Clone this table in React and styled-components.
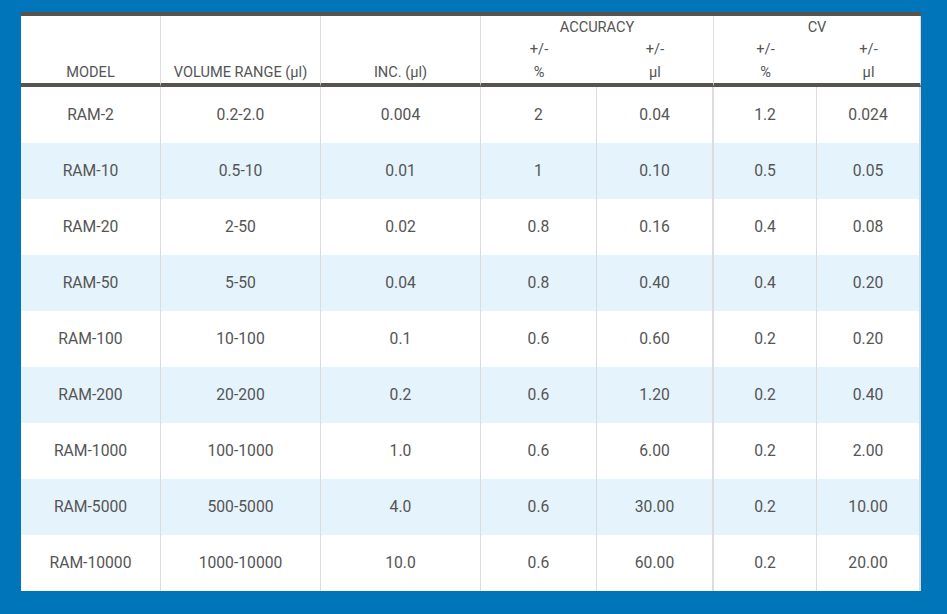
import React from "react";
import styled, { createGlobalStyle } from "styled-components";

const Global = createGlobalStyle`
  html, body { margin: 0; padding: 0; }
  body {
    background: #0075ba;
    font-family: Roboto, "Liberation Sans", Arial, sans-serif;
  }
`;

const Page = styled.div`
  width: 947px;
  height: 614px;
  padding: 12px 0 0 21px;
  box-sizing: border-box;
`;

const Table = styled.table`
  width: 900px;
  table-layout: fixed;
  border-collapse: separate;
  border-spacing: 0;
  background: #fff;
  border-top: 4px solid #57544e;
  color: #555;
`;

const HeadRow = styled.tr`
  height: ${(p) => p.$h}px;
`;

const Th = styled.th`
  font-weight: 400;
  font-size: 14.6px;
  line-height: 22px;
  padding: 0;
  text-align: center;
  vertical-align: ${(p) => (p.$bottom ? "bottom" : "middle")};
  border-right: ${(p) => (p.$line ? "1px solid #dcdcdc" : "none")};
  border-bottom: ${(p) => (p.$base ? "4px solid #57544e" : "none")};
  box-sizing: border-box;
`;

const Row = styled.tr`
  height: 56px;
  background: ${(p) => (p.$alt ? "#e5f3fc" : "#fff")};
`;

const Td = styled.td`
  font-size: 15.7px;
  line-height: 20px;
  padding: 0 0 1px;
  text-align: center;
  vertical-align: middle;
  border-right: ${(p) => p.$w}px solid #dcdcdc;
`;

const cols = [140, 160, 160, 116, 117, 103, 104];
const borders = [1, 1, 1, 1, 2, 1, 2];

const rows = [
  ["RAM-2", "0.2-2.0", "0.004", "2", "0.04", "1.2", "0.024"],
  ["RAM-10", "0.5-10", "0.01", "1", "0.10", "0.5", "0.05"],
  ["RAM-20", "2-50", "0.02", "0.8", "0.16", "0.4", "0.08"],
  ["RAM-50", "5-50", "0.04", "0.8", "0.40", "0.4", "0.20"],
  ["RAM-100", "10-100", "0.1", "0.6", "0.60", "0.2", "0.20"],
  ["RAM-200", "20-200", "0.2", "0.6", "1.20", "0.2", "0.40"],
  ["RAM-1000", "100-1000", "1.0", "0.6", "6.00", "0.2", "2.00"],
  ["RAM-5000", "500-5000", "4.0", "0.6", "30.00", "0.2", "10.00"],
  ["RAM-10000", "1000-10000", "10.0", "0.6", "60.00", "0.2", "20.00"],
];

export default function App() {
  return (
    <>
      <Global />
      <Page>
        <Table>
          <colgroup>
            {cols.map((w, i) => (
              <col key={i} style={{ width: w }} />
            ))}
          </colgroup>
          <thead>
            <HeadRow $h={22}>
              <Th rowSpan={3} $bottom $line $base>MODEL</Th>
              <Th rowSpan={3} $bottom $line $base>VOLUME RANGE (µl)</Th>
              <Th rowSpan={3} $bottom $line $base>INC. (µl)</Th>
              <Th colSpan={2} $line>ACCURACY</Th>
              <Th colSpan={2} $line>CV</Th>
            </HeadRow>
            <HeadRow $h={22}>
              <Th>+/-</Th>
              <Th $line>+/-</Th>
              <Th>+/-</Th>
              <Th $line>+/-</Th>
            </HeadRow>
            <HeadRow $h={27}>
              <Th $base>%</Th>
              <Th $base $line>µl</Th>
              <Th $base>%</Th>
              <Th $base $line>µl</Th>
            </HeadRow>
          </thead>
          <tbody>
            {rows.map((r, i) => (
              <Row key={i} $alt={i % 2 === 1}>
                {r.map((c, j) => (
                  <Td key={j} $w={borders[j]}>{c}</Td>
                ))}
              </Row>
            ))}
          </tbody>
        </Table>
      </Page>
    </>
  );
}
